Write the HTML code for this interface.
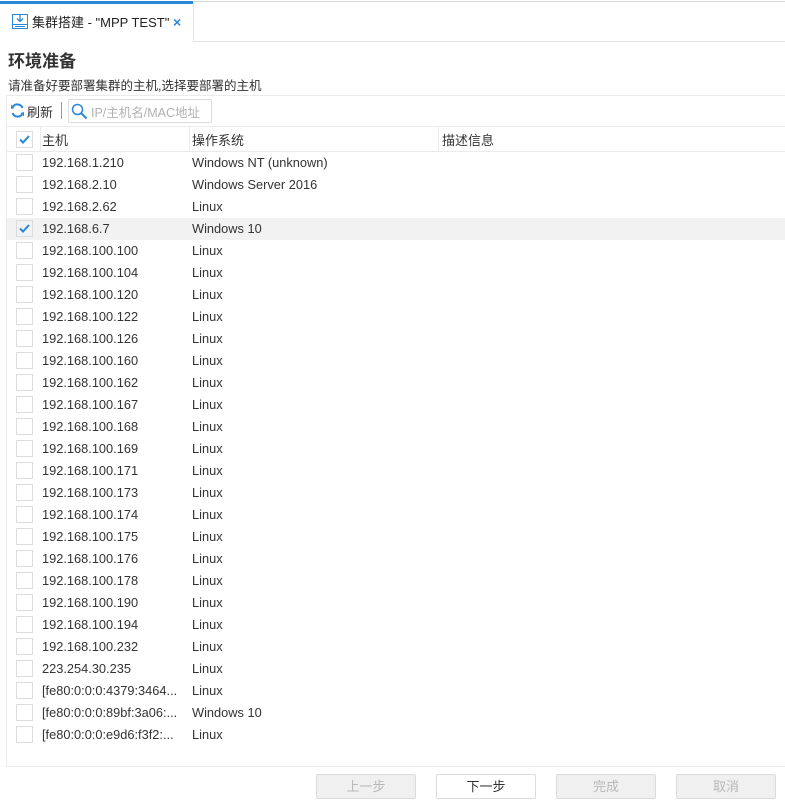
<!DOCTYPE html>
<html><head><meta charset="utf-8"><style>
*{margin:0;padding:0;box-sizing:border-box}
body{width:785px;height:804px;background:#fff;font-family:"Liberation Sans","Noto Sans CJK SC",sans-serif;color:#333;position:relative;overflow:hidden;font-size:12.8px}
.abs{position:absolute}
.topline{left:0;top:1px;width:785px;height:1px;background:#d8d8d8}
.tab{left:0;top:1px;width:193px;height:41px;background:#fff;border-top:3px solid #2b88d8}
.tabbar{left:193px;top:1px;width:592px;height:41px;border-left:1px solid #e2e2e2;border-bottom:1px solid #e2e2e2}
.hl{height:1px;background:#ebebeb}
.cb{position:absolute;left:16px;width:17px;height:17px;border:1px solid #dcdcdc;background:#fff}
.row{position:absolute;left:7px;width:778px;height:22px;line-height:22px}
.row .h{position:absolute;left:35px}
.row .o{position:absolute;left:185px}
.btn{position:absolute;top:774px;width:100px;height:25px;border:1px solid #dcdcdc;border-radius:2px;background:#f0f0f0;color:#b8b8b8;text-align:center;line-height:23px;font-size:13px}
</style></head><body>
<div class="abs topline"></div>
<div class="abs tabbar"></div>
<div class="abs tab">
 <svg class="abs" style="left:12px;top:9px" width="16" height="17" viewBox="0 0 16 17"><rect x="0.5" y="1.5" width="15" height="14" fill="none" stroke="#2b88d8"/><line x1="0.5" y1="11.5" x2="15.5" y2="11.5" stroke="#2b88d8"/><line x1="3" y1="13.5" x2="13" y2="13.5" stroke="#2b88d8"/><path d="M8 1V8M5 5.5L8 8.5L11 5.5" fill="none" stroke="#2b88d8" stroke-width="1.3"/></svg>
 <div class="abs" style="left:32px;top:8px;font-size:13px;color:#222">集群搭建 - "MPP TEST"</div>
 <div class="abs" style="left:173px;top:10px;font-size:14px;color:#2b88d8;font-weight:bold">×</div>
</div>
<div class="abs" style="left:8px;top:47px;font-size:17px;font-weight:bold;color:#333">环境准备</div>
<div class="abs" style="left:8px;top:75px;font-size:12.5px;color:#333">请准备好要部署集群的主机,选择要部署的主机</div>
<div class="abs hl" style="left:6px;top:95px;width:779px"></div>
<div class="abs" style="left:6px;top:95px;width:1px;height:672px;background:#ebebeb"></div>
<svg class="abs" style="left:10px;top:103px" width="15" height="15" viewBox="0 0 15 15"><path d="M12.5 5A5.5 5.5 0 0 0 3 3.5M2.5 10A5.5 5.5 0 0 0 12 11.5" fill="none" stroke="#2b88d8" stroke-width="2"/><path d="M1 1.5L4.5 5L1 6Z M14 13.5L10.5 10L14 9Z" fill="#2b88d8"/></svg>
<div class="abs" style="left:27px;top:102px;font-size:13px">刷新</div>
<div class="abs" style="left:61px;top:102px;width:1px;height:17px;background:#999"></div>
<div class="abs" style="left:68px;top:99px;width:144px;height:24px;border:1px solid #dcdcdc;border-radius:2px"></div>
<svg class="abs" style="left:71px;top:103px" width="17" height="17" viewBox="0 0 17 17"><circle cx="6.5" cy="6.5" r="5" fill="none" stroke="#2b88d8" stroke-width="1.5"/><line x1="10" y1="10" x2="15.5" y2="15.5" stroke="#2b88d8" stroke-width="2"/></svg>
<div class="abs" style="left:91px;top:102px;font-size:12.5px;color:#b0b0b0">IP/主机名/MAC地址</div>
<div class="abs hl" style="left:6px;top:126px;width:779px"></div>
<div class="abs hl" style="left:6px;top:151px;width:779px"></div>
<div class="abs" style="left:40px;top:127px;width:1px;height:24px;background:#ebebeb"></div>
<div class="abs" style="left:189px;top:127px;width:1px;height:24px;background:#ebebeb"></div>
<div class="abs" style="left:438px;top:127px;width:1px;height:24px;background:#ebebeb"></div>
<div class="cb" style="top:131px"><svg width="15" height="15" viewBox="0 0 15 15"><path d="M3 7.5L6 10.5L12 4" fill="none" stroke="#2b88d8" stroke-width="2"/></svg></div>
<div class="abs" style="left:42px;top:130px;font-size:13px">主机</div>
<div class="abs" style="left:192px;top:130px;font-size:13px">操作系统</div>
<div class="abs" style="left:442px;top:130px;font-size:13px">描述信息</div>
<div id="rows"></div>
<div class="abs hl" style="left:6px;top:766px;width:779px"></div>
<div class="btn" style="left:316px">上一步</div>
<div class="btn" style="left:436px;background:#fff;color:#333">下一步</div>
<div class="btn" style="left:556px">完成</div>
<div class="btn" style="left:676px">取消</div>
<script>
var d=[["192.168.1.210","Windows NT (unknown)"],["192.168.2.10","Windows Server 2016"],["192.168.2.62","Linux"],["192.168.6.7","Windows 10"],["192.168.100.100","Linux"],["192.168.100.104","Linux"],["192.168.100.120","Linux"],["192.168.100.122","Linux"],["192.168.100.126","Linux"],["192.168.100.160","Linux"],["192.168.100.162","Linux"],["192.168.100.167","Linux"],["192.168.100.168","Linux"],["192.168.100.169","Linux"],["192.168.100.171","Linux"],["192.168.100.173","Linux"],["192.168.100.174","Linux"],["192.168.100.175","Linux"],["192.168.100.176","Linux"],["192.168.100.178","Linux"],["192.168.100.190","Linux"],["192.168.100.194","Linux"],["192.168.100.232","Linux"],["223.254.30.235","Linux"],["[fe80:0:0:0:4379:3464...","Linux"],["[fe80:0:0:0:89bf:3a06:...","Windows 10"],["[fe80:0:0:0:e9d6:f3f2:...","Linux"]];
var h="";d.forEach(function(r,i){var t=152+i*22;var sel=i==3;
h+='<div class="row" style="top:'+t+'px;'+(sel?'background:#f2f2f2':'')+'"><span class="h">'+r[0]+'</span><span class="o">'+r[1]+'</span></div>';
h+='<div class="cb" style="top:'+(t+2)+'px;'+(sel?'background:transparent':'')+'">'+(sel?'<svg width="15" height="15" viewBox="0 0 15 15"><path d="M3 7.5L6 10.5L12 4" fill="none" stroke="#2b88d8" stroke-width="2"/></svg>':'')+'</div>';});
document.getElementById("rows").innerHTML=h;
</script>
</body></html>
